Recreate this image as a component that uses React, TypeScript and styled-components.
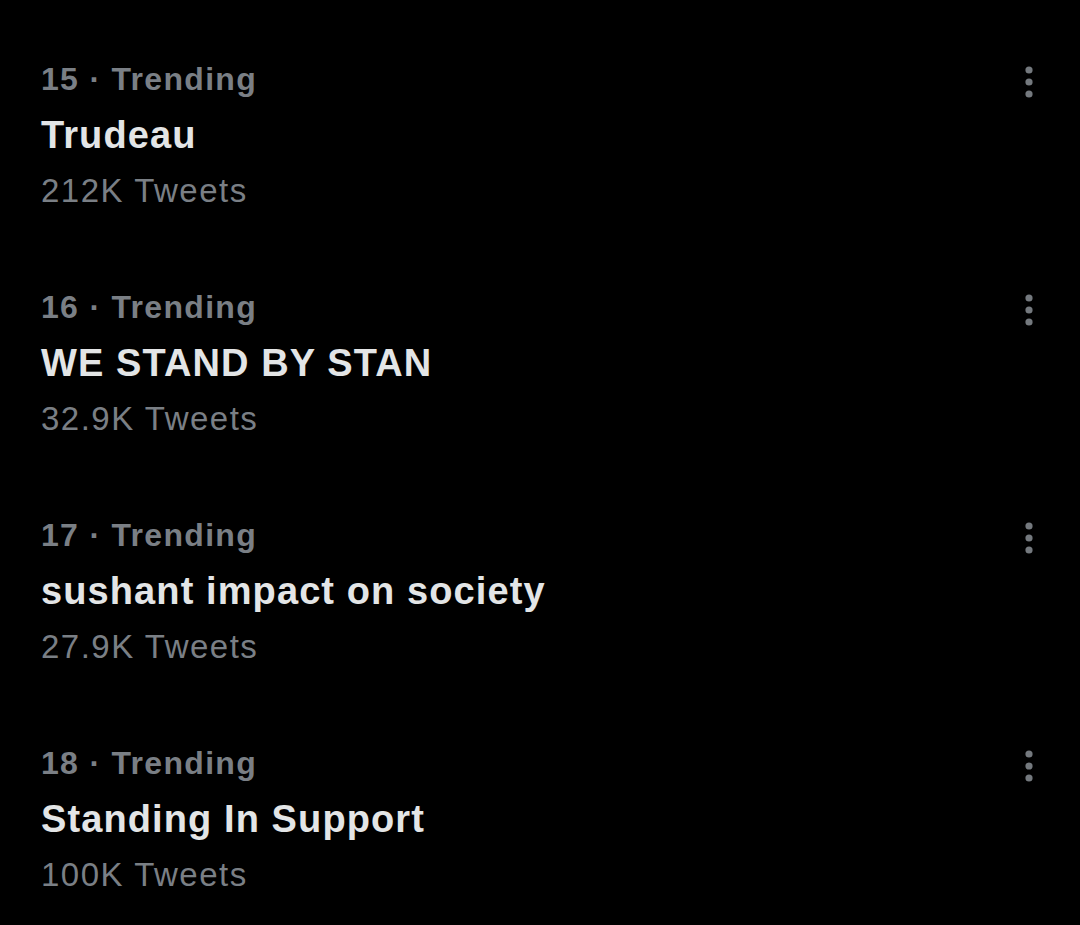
import React from "react";
import styled, { createGlobalStyle } from "styled-components";

const GlobalStyle = createGlobalStyle`
  html, body {
    margin: 0;
    padding: 0;
    background: #000000;
  }
  body {
    font-family: "Liberation Sans", Arial, sans-serif;
    -webkit-font-smoothing: antialiased;
  }
`;

const Page = styled.main`
  width: 1080px;
  min-height: 925px;
  background: #000000;
  padding-top: 21px;
  box-sizing: border-box;
`;

const TrendRow = styled.article`
  display: flex;
  align-items: flex-start;
  justify-content: space-between;
  padding: 30px 47px 30px 41px;
`;

const TrendText = styled.div`
  display: flex;
  flex-direction: column;
`;

const Meta = styled.div`
  font-size: 32px;
  line-height: 56px;
  font-weight: 700;
  color: #7a7f85;
  letter-spacing: 1.3px;
  white-space: nowrap;
`;

const Title = styled.div`
  font-size: 38px;
  line-height: 56px;
  font-weight: 700;
  color: #e3e5e6;
  letter-spacing: 1.1px;
  white-space: nowrap;
`;

const Count = styled.div`
  font-size: 33px;
  line-height: 56px;
  font-weight: 400;
  color: #7a7f85;
  letter-spacing: 1.5px;
  white-space: nowrap;
`;

const MoreButton = styled.button`
  margin-top: 15px;
  padding: 0;
  border: 0;
  background: transparent;
  display: flex;
  cursor: pointer;
`;

const MoreIcon = () => (
  <svg width="8" height="32" viewBox="0 0 8 32" aria-hidden="true">
    <circle cx="4" cy="4" r="3.6" fill="#74797e" />
    <circle cx="4" cy="16" r="3.6" fill="#74797e" />
    <circle cx="4" cy="28" r="3.6" fill="#74797e" />
  </svg>
);

type Trend = { rank: number; title: string; count: string };

const trends: Trend[] = [
  { rank: 15, title: "Trudeau", count: "212K Tweets" },
  { rank: 16, title: "WE STAND BY STAN", count: "32.9K Tweets" },
  { rank: 17, title: "sushant impact on society", count: "27.9K Tweets" },
  { rank: 18, title: "Standing In Support", count: "100K Tweets" },
];

export default function App() {
  return (
    <>
      <GlobalStyle />
      <Page>
        {trends.map((t) => (
          <TrendRow key={t.rank}>
            <TrendText>
              <Meta>{t.rank} · Trending</Meta>
              <Title>{t.title}</Title>
              <Count>{t.count}</Count>
            </TrendText>
            <MoreButton aria-label="More">
              <MoreIcon />
            </MoreButton>
          </TrendRow>
        ))}
      </Page>
    </>
  );
}
